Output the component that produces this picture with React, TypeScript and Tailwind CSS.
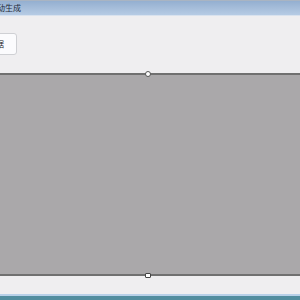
export default function App() {
  return (
    <div className="w-[300px] h-[300px] overflow-hidden flex flex-col bg-[#efeef0] font-['Noto_Sans_CJK_SC',sans-serif]">
      {/* title bar */}
      <div className="h-[15px] shrink-0 border-t border-[#a9b4c2] bg-gradient-to-b from-[#94afd0] to-[#b6cbe4] flex items-center overflow-hidden">
        <span className="-ml-[3px] text-[8px] leading-none text-[#1e2a3a] whitespace-nowrap">动生成</span>
      </div>
      <div className="h-px shrink-0 bg-[#d9e2ee]" />

      {/* toolbar */}
      <div className="h-[57px] shrink-0 pt-[17px] overflow-hidden">
        <div className="-ml-[10px] w-[27px] h-[22px] bg-[#fbfbfd] border border-[#cfd0d4] rounded-[3px] flex items-center justify-end pr-[12px]">
          <span className="text-[8px] leading-none text-[#222]">据</span>
        </div>
      </div>

      {/* canvas */}
      <div className="relative h-[203px] shrink-0 bg-[#aaa8aa] border-y-2 border-y-[#707070]">
        <div className="absolute left-[145px] -top-[4px] w-[6px] h-[6px] rounded-full bg-white border border-[#555]" />
        <div className="absolute left-[145px] -bottom-[4px] w-[6px] h-[5px] rounded-[1px] bg-white border border-[#444]" />
      </div>

      {/* bottom */}
      <div className="flex-1" />
      <div className="h-[2px] shrink-0 bg-[#b8d0e8]" />
      <div className="h-[4px] shrink-0 bg-[#528d9f]" />
    </div>
  );
}
